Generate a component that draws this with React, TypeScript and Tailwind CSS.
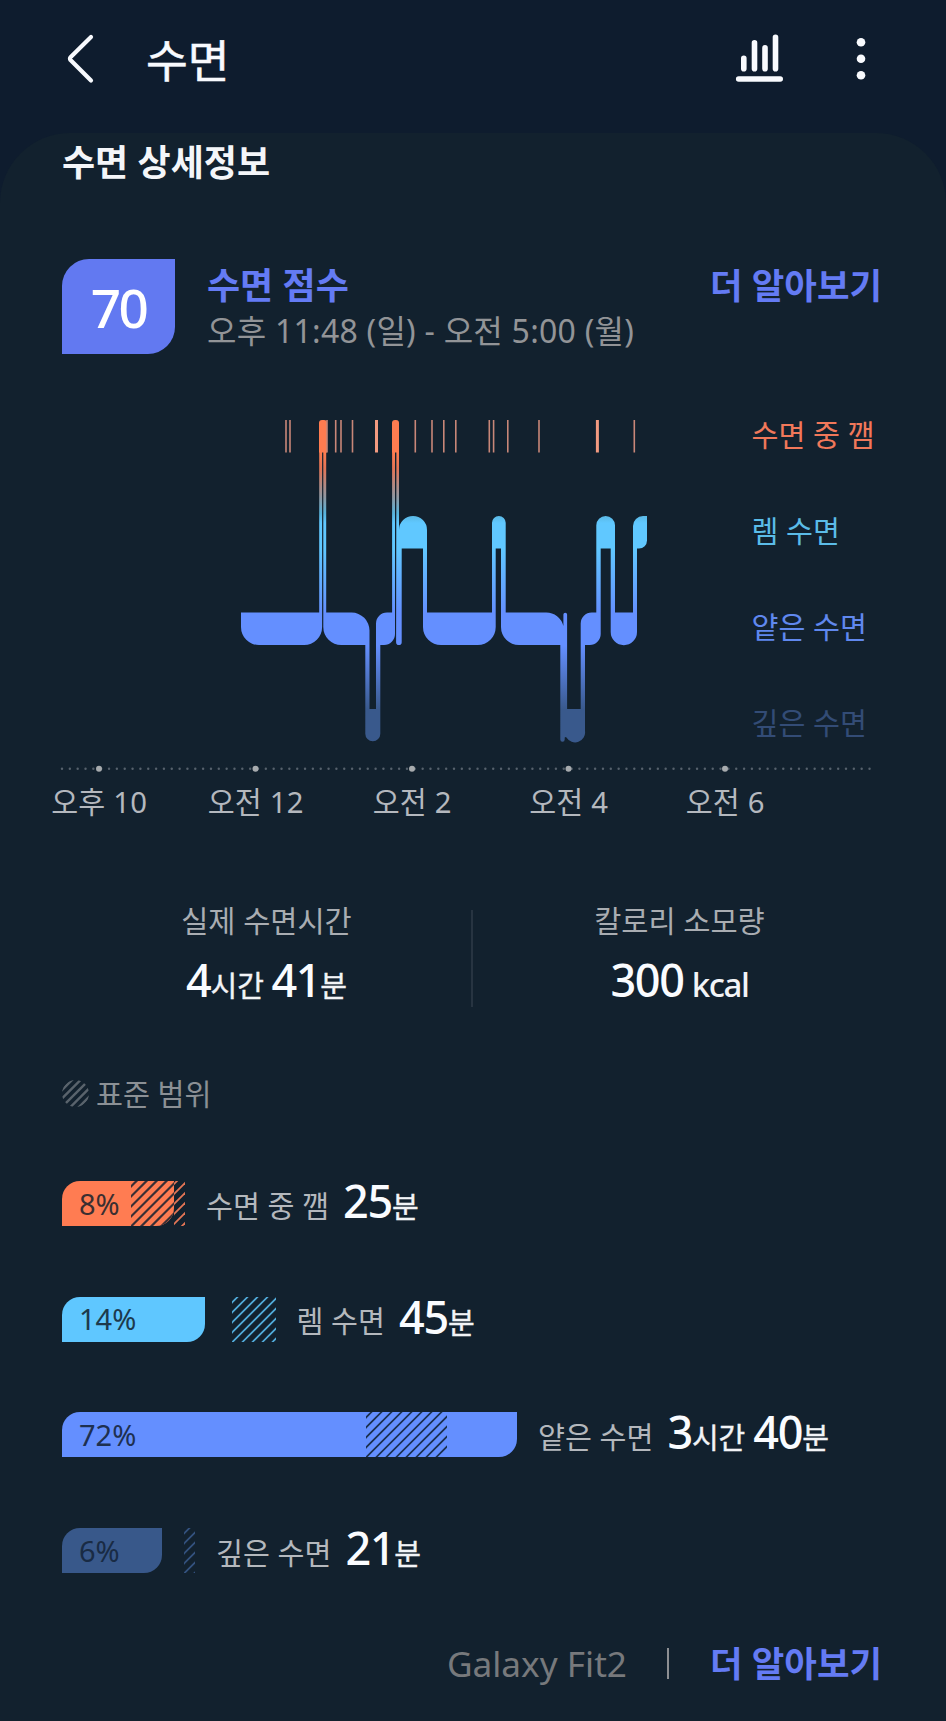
import React from "react";

const STEP = 10;

function Hatch({ width, color, className = "", offset = 0.5, stroke = 1.4 }: { width: number; color: string; className?: string; offset?: number; stroke?: number }) {
  const lines: number[] = [];
  for (let x = -60 + offset; x < width; x += STEP) lines.push(x);
  return (
    <svg width={width} height="45" viewBox={`0 0 ${width} 45`} className={`block shrink-0 overflow-hidden ${className}`}>
      {lines.map((x) => (
        <line key={x} x1={x - 1} y1="46" x2={x + 46} y2="-1" stroke={color} strokeWidth={stroke} />
      ))}
    </svg>
  );
}

function Num({ children, className = "" }: { children: React.ReactNode; className?: string }) {
  return <span className={`text-[45px] font-medium tracking-[-1.3px] text-[#fafcff] ${className}`}>{children}</span>;
}

function Unit({ children }: { children: React.ReactNode }) {
  return <span className="text-[29px] text-[#f2f4f7] [-webkit-text-stroke:0.4px]">{children}</span>;
}

function StageRow({ bar, name, children }: { bar: React.ReactNode; name: string; children: React.ReactNode }) {
  return (
    <div className="flex h-[45px] items-center">
      {bar}
      <span className="ml-[21px] pt-[5px] text-[29.3px] leading-[45px] text-[#b4b8bd]">{name}</span>
      <span className="ml-[14px] flex items-baseline leading-[45px]">{children}</span>
    </div>
  );
}

const percent = "flex h-[45px] shrink-0 items-center rounded-tl-[18px] text-[29px] pl-[17px]";

const ticks = [286, 290, 327, 335.7, 341, 352.5, 415.3, 432, 443.8, 455.8, 489.3, 493.6, 507.8, 539, 634.3];
const wideTicks = [376.5, 597.4];
const hours = [
  { x: 99, label: "오후 10" },
  { x: 255.5, label: "오전 12" },
  { x: 412, label: "오전 2" },
  { x: 568.5, label: "오전 4" },
  { x: 725, label: "오전 6" },
];

function SleepChart() {
  const minor: number[] = [];
  for (let x = 62; x < 877; x += 7.84) minor.push(x);
  return (
    <svg width="946" height="365" viewBox="0 410 946 365" className="col-start-1 row-start-1 block">
      <defs>
        <linearGradient id="stage" gradientUnits="userSpaceOnUse" x1="0" y1="420" x2="0" y2="742">
          <stop offset="0.1" stopColor="#ff7c50" />
          <stop offset="0.15" stopColor="#e47556" />
          <stop offset="0.24" stopColor="#8f98a2" />
          <stop offset="0.29" stopColor="#58b4dc" />
          <stop offset="0.32" stopColor="#60c8ff" />
          <stop offset="0.4" stopColor="#60c8ff" />
          <stop offset="0.6" stopColor="#648fff" />
          <stop offset="0.7" stopColor="#648fff" />
          <stop offset="0.9" stopColor="#39598c" />
        </linearGradient>
      </defs>
      <g fill="url(#stage)">
        <path d="M319 452.5V423a3 3 0 0 1 3-3h2a3 3 0 0 1 3 3V452.5z" />
        <path d="M392 452.5V423a3 3 0 0 1 3-3h1a3 3 0 0 1 3 3V452.5z" />
        <path d="M319.2 452h2.9V627a18 18 0 0 1-18 18H259a18 18 0 0 1-18-18V612.6H319.2z" />
        <path d="M323.3 452h2.9V612.6H351.5a18 18 0 0 1 18 18V709H376V623.6a11 11 0 0 1 11-11H392.1V452H395V634a11 11 0 0 1-11 11H380.3V733.8a7.5 7.5 0 0 1-15 0V645H341.3a18 18 0 0 1-18-18z" />
        <path d="M396.4 452H399V530a14 14 0 0 1 28 0V612.6H492V522.8a6.85 6.85 0 0 1 13.7 0V612.6H546a17.7 17.7 0 0 1 17.4 13.5V614.5a1.85 1.85 0 0 1 3.7 0V709H580.7V623.6a11 11 0 0 1 11-11H596.3V525.3a9.35 9.35 0 0 1 18.7 0V612.6H633V526a10 10 0 0 1 10-10H647V540.5a8 8 0 0 1-8 8H637V632a13.15 13.15 0 0 1-26.3 0V548.5H600.7V634a11 11 0 0 1-11 11H585V731a10 10 0 0 1-18.5 6.5q-.8-1.2-1.8 0v2a2.2 2.2 0 0 1-4.4 0V645H519a18 18 0 0 1-18-18V548.5H495.7V627a18 18 0 0 1-18 18H441a18 18 0 0 1-18-18V548.5H401.7V642.2a2.8 2.8 0 0 1-5.6 0z" />
      </g>
      <g stroke="#c88778" strokeWidth="1.6">
        {ticks.map((x) => (
          <line key={x} x1={x} x2={x} y1="420" y2="452.5" />
        ))}
      </g>
      <g stroke="#f29a80" strokeWidth="3">
        {wideTicks.map((x) => (
          <line key={x} x1={x} x2={x} y1="420" y2="452.5" />
        ))}
      </g>
      <g fill="#56616c">
        {minor.map((x) => (
          <circle key={x} cx={x} cy="768.8" r="1.2" />
        ))}
      </g>
      <g fill="#a7abae">
        {hours.map((h) => (
          <circle key={h.x} cx={h.x} cy="768.8" r="3" />
        ))}
      </g>
    </svg>
  );
}

export default function App() {
  return (
    <div className="h-[1721px] w-[946px] overflow-hidden whitespace-nowrap bg-[#0e1c2e] font-['Noto_Sans','Noto_Sans_CJK_KR',sans-serif]">
      <header className="flex h-[133px] items-start pt-[29px] text-[#f8fafe]">
        <svg width="40" height="60" viewBox="0 0 40 60" className="ml-[60px]" fill="none" stroke="currentColor" strokeWidth="4.2" strokeLinecap="round" strokeLinejoin="round">
          <path d="M31 8 10.5 28.2Q9.5 29.5 10.5 31L31 51.5" />
        </svg>
        <h1 className="ml-[46px] text-[45.5px] leading-[63px] [-webkit-text-stroke:0.5px]">수면</h1>
        <svg width="56" height="60" viewBox="0 0 56 60" className="ml-auto" fill="none" stroke="currentColor" strokeWidth="5.6" strokeLinecap="round">
          <path d="M12.3 29.8V40.2M23 14.2V40.2M33.5 19.2V40.2M44 8.7V40.2M7.2 50.5H48.7" transform="translate(.5 -.5)" />
        </svg>
        <svg width="20" height="60" viewBox="0 0 20 60" className="ml-[64px] mr-[75px]" fill="currentColor">
          <circle cx="10" cy="13.3" r="4.3" />
          <circle cx="10" cy="29.7" r="4.3" />
          <circle cx="10" cy="46.2" r="4.3" />
        </svg>
      </header>
      <main className="h-[1588px] rounded-t-[70px] bg-[#12212e]">
        <h2 className="ml-[62px] pt-[6px] text-[36px] font-bold leading-[48px] text-[#f4f6f9]">수면 상세정보</h2>

        <section className="mt-[72px] flex h-[96px] items-start pl-[62px] pr-[64px]">
          <div className="flex h-[95px] w-[113px] items-center justify-center rounded-br-[27px] rounded-tl-[27px] bg-[#6279f1] pt-px text-[53px] font-medium leading-none tracking-[-2.5px] text-white">70</div>
          <div className="ml-[32px]">
            <div className="mt-[4px] text-[36px] font-bold leading-[46px] text-[#647bf4]">수면 점수</div>
            <div className="-mt-px text-[32px] leading-[46px] tracking-[0.25px] text-[#929497]">오후 11:48 (일) - 오전 5:00 (월)</div>
          </div>
          <a className="ml-auto mt-[3px] text-[35.4px] font-bold leading-[46px] text-[#647bf4]">더 알아보기</a>
        </section>

        <section className="mt-[55px] grid">
          <SleepChart />
          <div className="col-start-1 row-start-1 ml-[751.5px] flex flex-col text-[29.3px]">
            <span className="h-24 leading-[50px] text-[#f1785a]">수면 중 깸</span>
            <span className="h-24 leading-[50px] text-[#5bbce8]">렘 수면</span>
            <span className="h-24 leading-[50px] text-[#6088ee]">얕은 수면</span>
            <span className="leading-[50px] text-[#334c76]">깊은 수면</span>
          </div>
        </section>
        <div className="ml-[21px] grid w-[782.5px] grid-cols-5 pt-[6px] text-center text-[29.3px] leading-[42px] tracking-[0.2px] text-[#b4b8be]">
          {hours.map((h) => (
            <span key={h.x}>{h.label}</span>
          ))}
        </div>

        <section className="mt-[74px] flex h-[120px] pl-[61px]">
          <div className="w-[410px] pl-px text-center">
            <div className="text-[29.5px] leading-[48px] text-[#a9adb2]">실제 수면시간</div>
            <div className="mt-[8px] leading-[54px]">
              <Num>4</Num><Unit>시간 </Unit><Num>41</Num><Unit>분</Unit>
            </div>
          </div>
          <div className="mt-[13px] h-[97px] w-[2px] bg-[#273441]" />
          <div className="w-[413px] text-center">
            <div className="text-[29.5px] leading-[48px] text-[#a9adb2]">칼로리 소모량</div>
            <div className="mt-[8px] leading-[54px]">
              <Num>300</Num>
              <span className="ml-[8px] text-[33px] font-medium tracking-[-1.4px] text-[#f2f4f7]">kcal</span>
            </div>
          </div>
        </section>

        <div className="ml-[62px] mt-[54px] flex h-[48px] items-center">
          <svg width="27" height="27" viewBox="0 0 27 27" className="-mt-[4px]" stroke="#59636c" strokeWidth="2.4">
            <clipPath id="dot"><circle cx="13.5" cy="13.5" r="13.5" /></clipPath>
            <path clipPath="url(#dot)" d="M-2 12 12-2M-2 20.5 20.5-2M-2 29 29-2M3 32.5 32.5 3M12 32 32 12" />
          </svg>
          <span className="ml-[7px] text-[29.3px] text-[#8b9095]">표준 범위</span>
        </div>

        <section className="ml-[62px] mt-[62px] flex flex-col gap-[70.7px]">
          <StageRow
            name="수면 중 깸"
            bar={
              <>
                <div className={`${percent} w-[112px] justify-between overflow-hidden rounded-br-[18px] bg-[#ff7c52] text-[#3a2f31]`}>
                  8%
                  <Hatch width={43} color="#3a2f35" stroke={2.2} />
                </div>
                <Hatch width={11} color="#e47556" offset={8} stroke={1.8} />
              </>
            }
          >
            <Num>25</Num><Unit>분</Unit>
          </StageRow>
          <StageRow
            name="렘 수면"
            bar={
              <>
                <div className={`${percent} w-[143px] rounded-br-[18px] bg-[#5fc7ff] text-[#1d3a4d]`}>14%</div>
                <Hatch width={43.5} color="#53addc" className="ml-[27px]" stroke={1.7} />
              </>
            }
          >
            <Num>45</Num><Unit>분</Unit>
          </StageRow>
          <StageRow
            name="얕은 수면"
            bar={
              <div className={`${percent} w-[455px] rounded-br-[18px] bg-[#648fff] pr-[70.5px] text-[#1e3050]`}>
                72%
                <Hatch width={80.5} color="#1a2f4e" className="ml-auto" stroke={1.7} />
              </div>
            }
          >
            <Num>3</Num><Unit>시간</Unit><Num className="ml-2">40</Num><Unit>분</Unit>
          </StageRow>
          <StageRow
            name="깊은 수면"
            bar={
              <>
                <div className={`${percent} w-[100px] rounded-br-[18px] bg-[#38588a] text-[#192b44]`}>6%</div>
                <Hatch width={11} color="#34527f" className="ml-[22px]" stroke={1.8} />
              </>
            }
          >
            <Num>21</Num><Unit>분</Unit>
          </StageRow>
        </section>

        <footer className="mt-[65px] flex items-center justify-end pr-[64px] leading-[50px]">
          <span className="text-[35.2px] text-[#77797c]">Galaxy Fit2</span>
          <span className="ml-[40px] h-[31px] w-[2px] bg-[#8d8f92]" />
          <a className="ml-[41px] text-[35.4px] font-bold text-[#647bf4]">더 알아보기</a>
        </footer>
      </main>
    </div>
  );
}
